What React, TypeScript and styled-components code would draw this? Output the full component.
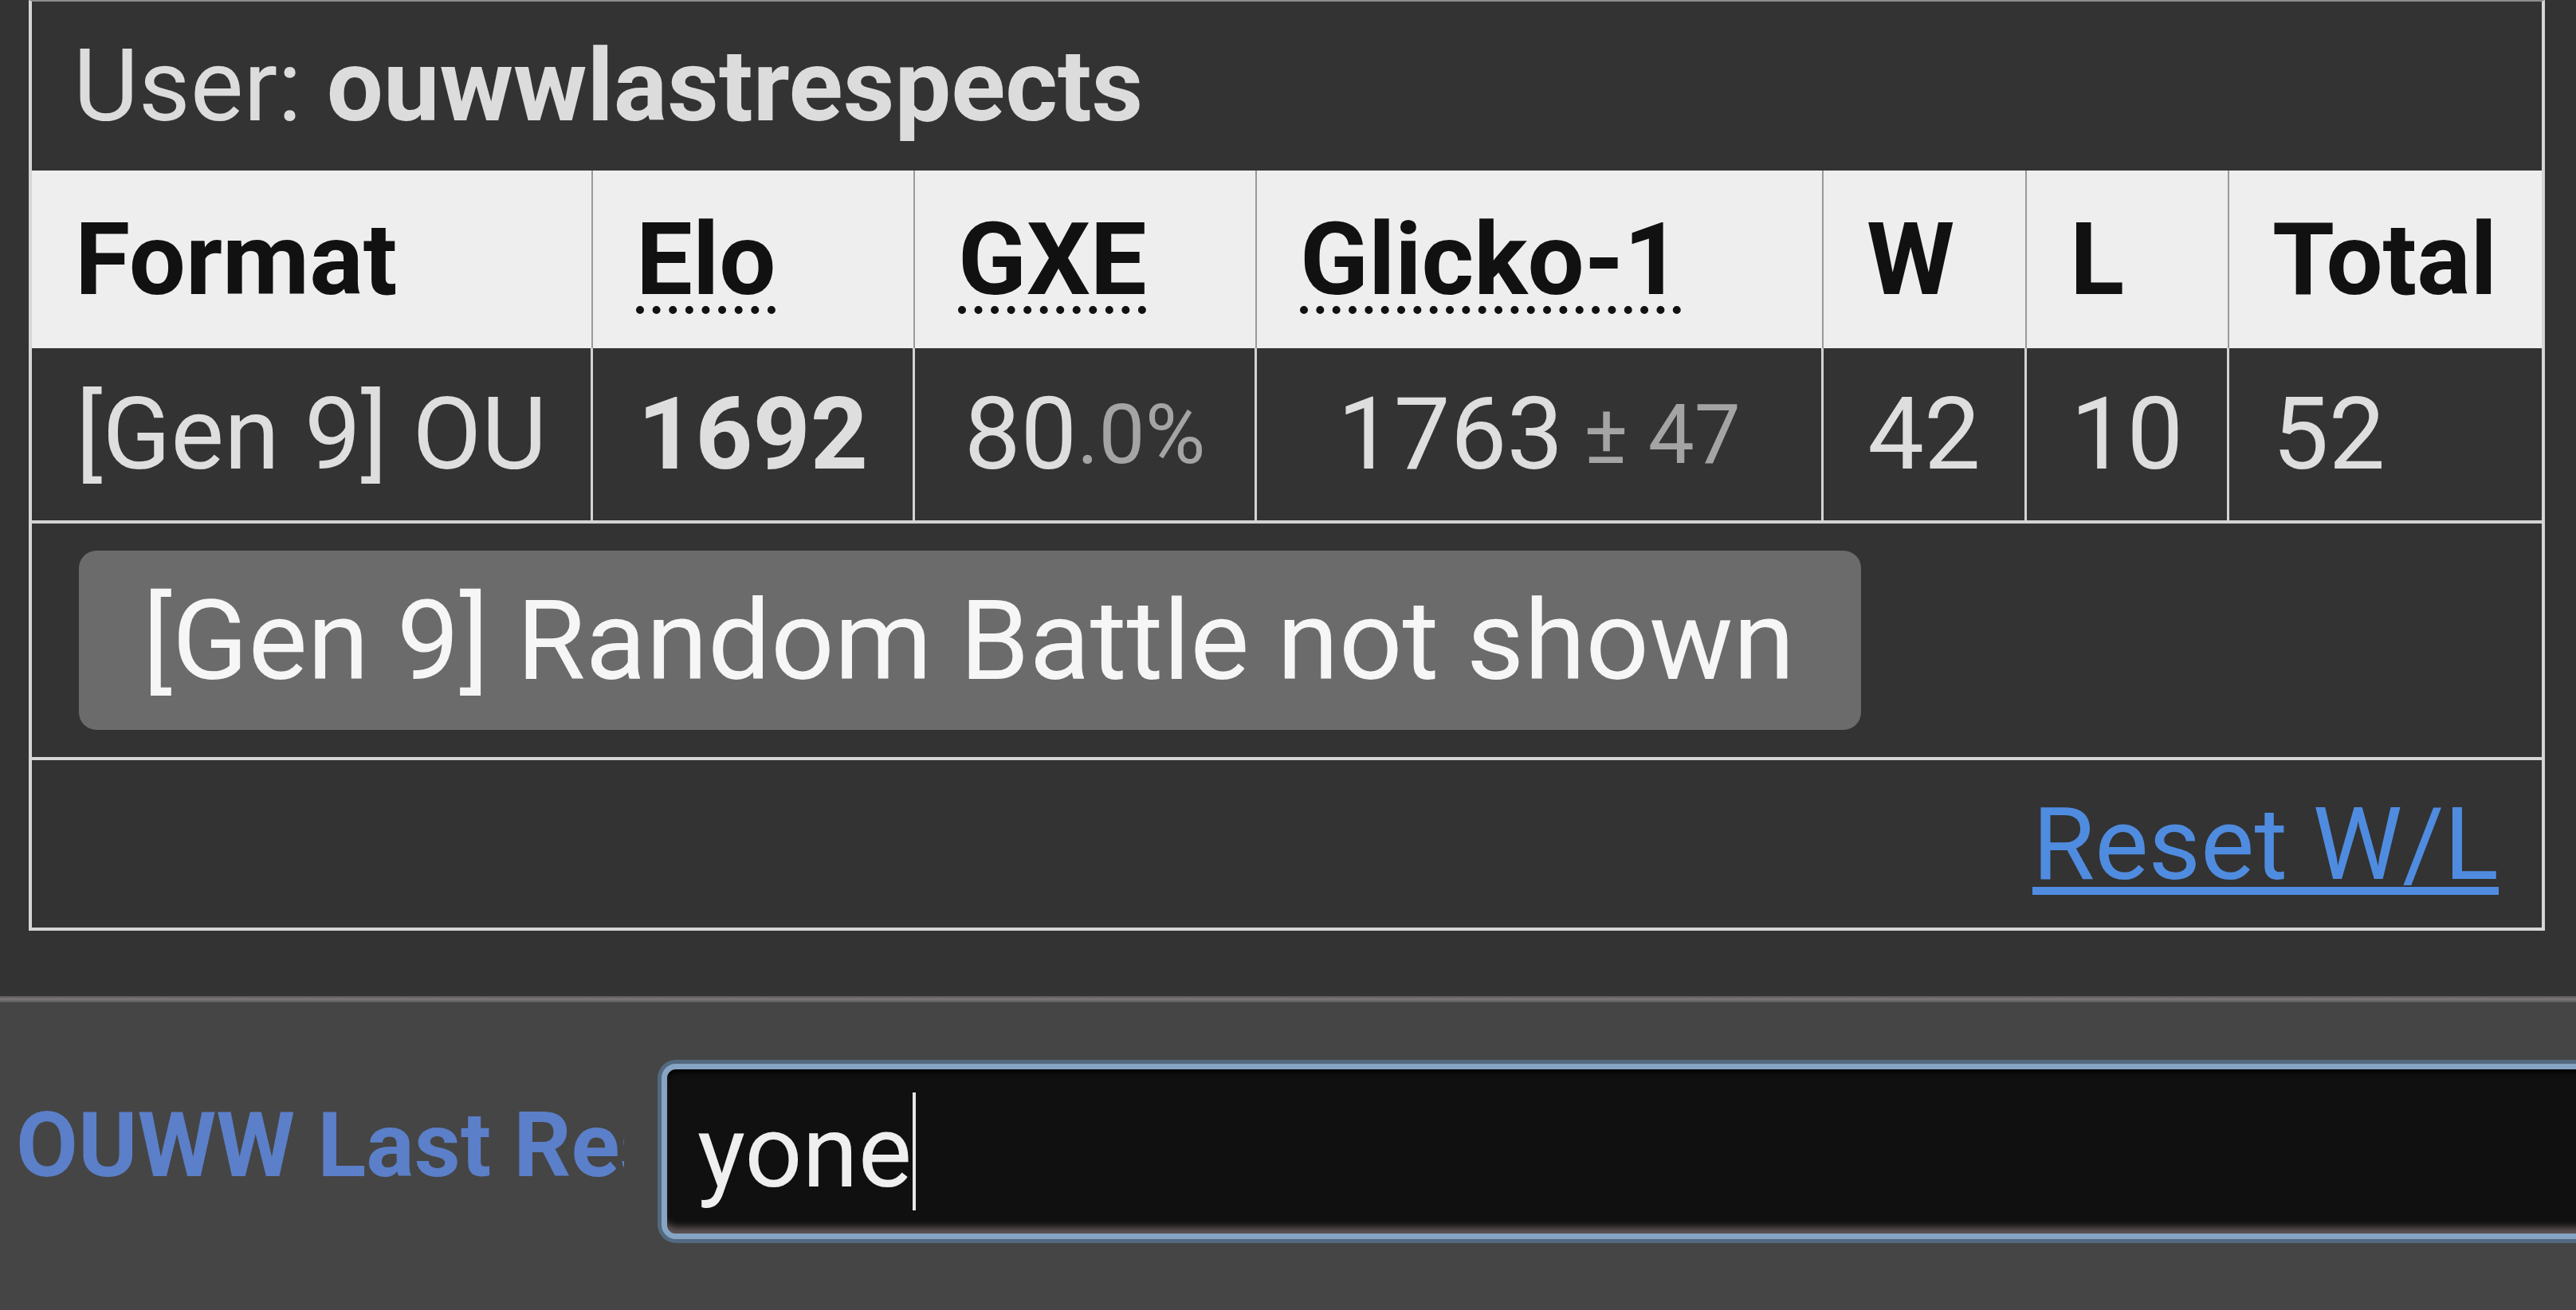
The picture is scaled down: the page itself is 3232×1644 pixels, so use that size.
import React from 'react';
import styled, { createGlobalStyle } from 'styled-components';

const GlobalStyle = createGlobalStyle`
  html, body {
    margin: 0;
    padding: 0;
    background: #444;
  }
  body {
    font-family: Roboto, "Liberation Sans", Arial, sans-serif;
  }
`;

const Page = styled.div`
  width: 3232px;
  height: 1644px;
  overflow: hidden;
  display: flex;
  flex-direction: column;
  background: #454545;
`;

const Popup = styled.div`
  height: 1250px;
  flex-shrink: 0;
  box-sizing: border-box;
  padding: 0 39px 0 36px;
  background: #333;
`;

const Panel = styled.div`
  border: 4px solid #d6d6d6;
  border-top: 2px solid #8c8c8c;
  background: #333;
`;

const TitleRow = styled.div`
  height: 212px;
  display: flex;
  align-items: center;
  padding-left: 52px;
  font-size: 126px;
  color: #dcdcdc;
`;

const Name = styled.strong`
  font-weight: 700;
  margin-left: 31px;
`;

const Row = styled.div<{ $head?: boolean }>`
  display: grid;
  grid-template-columns: 704px 404px 429px 711px 255px 254px 1fr;
  height: ${p => (p.$head ? 223 : 220)}px;
  box-sizing: border-box;
  background: ${p => (p.$head ? '#eeeeee' : '#333')};
  border-bottom: ${p => (p.$head ? 'none' : '4px solid #d4d4d4')};
`;

const HeadCell = styled.div`
  display: flex;
  align-items: center;
  padding-left: 54px;
  border-right: 2px solid #9a9a9a;
  font-size: 126px;
  font-weight: 700;
  color: #111;

  &:last-child {
    border-right: none;
  }
`;

const Dotted = styled.span`
  text-decoration: underline dotted #111;
  text-decoration-thickness: 10px;
  text-underline-offset: 16px;
`;

const Cell = styled.div<{ $left?: boolean; $bold?: boolean }>`
  display: flex;
  align-items: center;
  justify-content: ${p => (p.$left ? 'flex-start' : 'center')};
  padding-left: ${p => (p.$left ? 54 : 0)}px;
  border-right: 3px solid #d4d4d4;
  font-size: 126px;
  font-weight: ${p => (p.$bold ? 700 : 400)};
  color: #dedede;
  white-space: nowrap;

  &:last-child {
    border-right: none;
  }
`;

const Dim = styled.small`
  font-size: 82%;
  color: #a4a4a4;
`;

const ChipRow = styled.div`
  height: 293px;
  display: flex;
  align-items: center;
  padding-left: 59px;
  border-bottom: 4px solid #d4d4d4;
`;

const Chip = styled.div`
  width: 2236px;
  height: 225px;
  box-sizing: border-box;
  display: flex;
  align-items: center;
  padding-left: 80px;
  border-radius: 22px;
  background: #6b6b6b;
  color: #f6f6f6;
  font-size: 140px;
  white-space: nowrap;
`;

const ResetRow = styled.div`
  height: 210px;
  display: flex;
  align-items: center;
  justify-content: flex-end;
  padding-right: 54px;
`;

const ResetLink = styled.a`
  font-size: 127px;
  color: #4f8ce0;
  text-decoration: underline;
  text-decoration-thickness: 10px;
  text-underline-offset: 10px;
  cursor: pointer;
`;

const Divider = styled.div`
  height: 8px;
  flex-shrink: 0;
  background: linear-gradient(#555, #787474 40%, #787474 60%, #555);
`;

const ChatBar = styled.div`
  flex: 1;
  display: flex;
  align-items: flex-start;
  padding: 77px 0 0 20px;
`;

const UserLabel = styled.div`
  width: 763px;
  flex-shrink: 0;
  margin-top: 36px;
  overflow: hidden;
  white-space: nowrap;
  font-size: 113px;
  font-weight: 700;
  color: #5b7fc8;
`;

const InputBox = styled.div`
  width: 2600px;
  height: 220px;
  flex-shrink: 0;
  margin-left: 47px;
  box-sizing: border-box;
  display: flex;
  align-items: center;
  padding-left: 38px;
  border: 7px solid #86a5c4;
  border-radius: 18px;
  background: #101010;
  box-shadow:
    0 0 0 5px rgba(95, 135, 175, 0.55),
    inset 0 -12px 8px -4px rgba(160, 140, 140, 0.55),
    inset 0 6px 6px -2px rgba(0, 0, 0, 0.9);
  font-size: 127px;
  color: #efefef;
`;

const Caret = styled.span`
  display: inline-block;
  width: 4px;
  height: 148px;
  margin-left: 1px;
  background: #e6e6e6;
`;

const App = () => (
  <Page>
    <GlobalStyle />
    <Popup>
      <Panel>
        <TitleRow>
          User:<Name>ouwwlastrespects</Name>
        </TitleRow>
        <Row $head>
          <HeadCell>Format</HeadCell>
          <HeadCell><Dotted>Elo</Dotted></HeadCell>
          <HeadCell><Dotted>GXE</Dotted></HeadCell>
          <HeadCell><Dotted>Glicko-1</Dotted></HeadCell>
          <HeadCell>W</HeadCell>
          <HeadCell>L</HeadCell>
          <HeadCell>Total</HeadCell>
        </Row>
        <Row>
          <Cell>[Gen 9] OU</Cell>
          <Cell $bold>1692</Cell>
          <Cell>80<Dim>.0%</Dim></Cell>
          <Cell>1763<Dim>&nbsp;± 47</Dim></Cell>
          <Cell>42</Cell>
          <Cell>10</Cell>
          <Cell $left>52</Cell>
        </Row>
        <ChipRow>
          <Chip>[Gen 9] Random Battle not shown</Chip>
        </ChipRow>
        <ResetRow>
          <ResetLink>Reset W/L</ResetLink>
        </ResetRow>
      </Panel>
    </Popup>
    <Divider />
    <ChatBar>
      <UserLabel>OUWW Last Respects</UserLabel>
      <InputBox>
        yone<Caret />
      </InputBox>
    </ChatBar>
  </Page>
);

export default App;
